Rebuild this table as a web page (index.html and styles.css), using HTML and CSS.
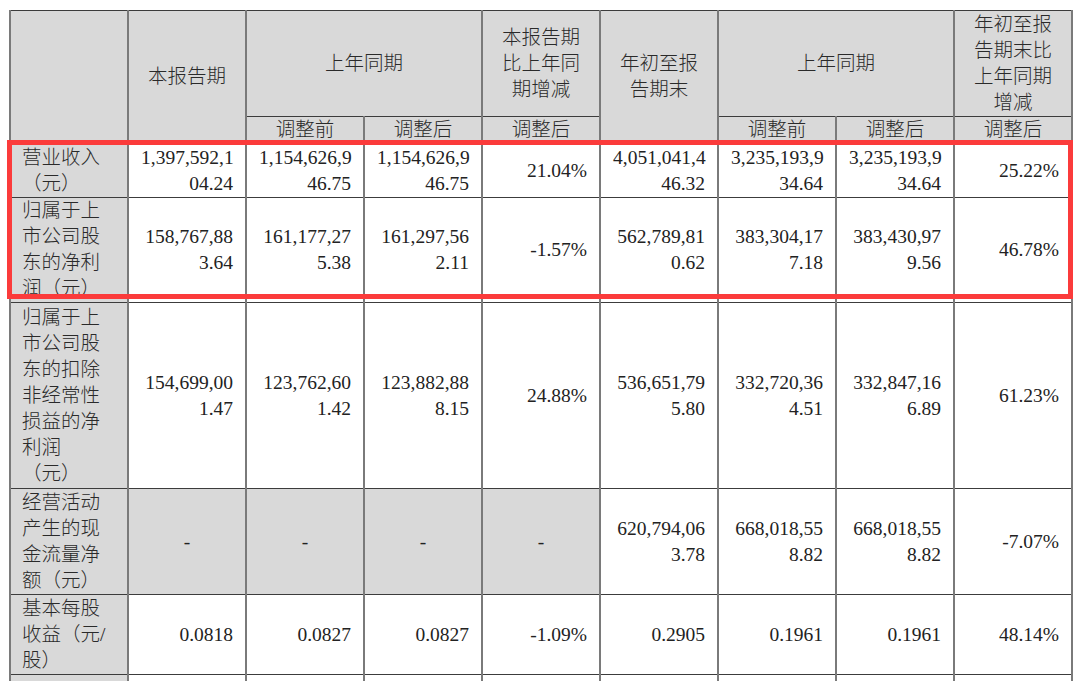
FILE: index.html
```html
<!DOCTYPE html>
<html lang="zh-CN">
<head>
<meta charset="utf-8">
<title>主要会计数据和财务指标</title>
<link rel="stylesheet" href="styles.css">
</head>
<body>
<div class="sheet">
  <table class="fin">
    <colgroup>
      <col><col><col><col><col><col><col><col><col>
    </colgroup>
    <thead>
      <tr class="h1">
        <th rowspan="2"></th>
        <th rowspan="2">本报告期</th>
        <th colspan="2">上年同期</th>
        <th>本报告期<br>比上年同<br>期增减</th>
        <th rowspan="2">年初至报<br>告期末</th>
        <th colspan="2">上年同期</th>
        <th>年初至报<br>告期末比<br>上年同期<br>增减</th>
      </tr>
      <tr class="h2">
        <th>调整前</th><th>调整后</th><th>调整后</th><th>调整前</th><th>调整后</th><th>调整后</th>
      </tr>
    </thead>
    <tbody>
      <tr class="r1">
        <td class="label">营业收入<br>（元）</td>
        <td class="num">1,397,592,1<br>04.24</td>
        <td class="num">1,154,626,9<br>46.75</td>
        <td class="num">1,154,626,9<br>46.75</td>
        <td class="num">21.04%</td>
        <td class="num">4,051,041,4<br>46.32</td>
        <td class="num">3,235,193,9<br>34.64</td>
        <td class="num">3,235,193,9<br>34.64</td>
        <td class="num">25.22%</td>
      </tr>
      <tr class="r2">
        <td class="label">归属于上<br>市公司股<br>东的净利<br>润（元）</td>
        <td class="num">158,767,88<br>3.64</td>
        <td class="num">161,177,27<br>5.38</td>
        <td class="num">161,297,56<br>2.11</td>
        <td class="num">-1.57%</td>
        <td class="num">562,789,81<br>0.62</td>
        <td class="num">383,304,17<br>7.18</td>
        <td class="num">383,430,97<br>9.56</td>
        <td class="num">46.78%</td>
      </tr>
      <tr class="r3">
        <td class="label">归属于上<br>市公司股<br>东的扣除<br>非经常性<br>损益的净<br>利润<br>（元）</td>
        <td class="num">154,699,00<br>1.47</td>
        <td class="num">123,762,60<br>1.42</td>
        <td class="num">123,882,88<br>8.15</td>
        <td class="num">24.88%</td>
        <td class="num">536,651,79<br>5.80</td>
        <td class="num">332,720,36<br>4.51</td>
        <td class="num">332,847,16<br>6.89</td>
        <td class="num">61.23%</td>
      </tr>
      <tr class="r4">
        <td class="label">经营活动<br>产生的现<br>金流量净<br>额（元）</td>
        <td class="dash">-</td>
        <td class="dash">-</td>
        <td class="dash">-</td>
        <td class="dash">-</td>
        <td class="num">620,794,06<br>3.78</td>
        <td class="num">668,018,55<br>8.82</td>
        <td class="num">668,018,55<br>8.82</td>
        <td class="num">-7.07%</td>
      </tr>
      <tr class="r5">
        <td class="label">基本每股<br>收益（元/<br>股）</td>
        <td class="num">0.0818</td>
        <td class="num">0.0827</td>
        <td class="num">0.0827</td>
        <td class="num">-1.09%</td>
        <td class="num">0.2905</td>
        <td class="num">0.1961</td>
        <td class="num">0.1961</td>
        <td class="num">48.14%</td>
      </tr>
      <tr class="r6">
        <td class="label"></td>
        <td class="num"></td>
        <td class="num"></td>
        <td class="num"></td>
        <td class="num"></td>
        <td class="num"></td>
        <td class="num"></td>
        <td class="num"></td>
        <td class="num"></td>
      </tr>
    </tbody>
  </table>
  <div class="highlight"></div>
</div>
</body>
</html>
```

FILE: styles.css
```css
* {
  box-sizing: border-box;
}

html, body {
  margin: 0;
  background: #ffffff;
}

body {
  height: 681px;
  overflow: hidden;
}

.sheet {
  position: relative;
  padding: 10px 0 0 9px;
}

.fin {
  border-collapse: collapse;
  table-layout: fixed;
  width: 1062px;
  font-family: "Liberation Serif", "Noto Sans CJK SC", serif;
  font-size: 19.5px;
  line-height: 26px;
  color: #222222;
}

.fin col {
  width: 118px;
}

.fin th,
.fin td {
  border-left: 2px solid #7a7a7a;
  border-right: 2px solid #7a7a7a;
  border-top: 1px solid #3c3c3c;
  border-bottom: 1px solid #3c3c3c;
  padding: 0 12px;
  vertical-align: middle;
}

.fin th {
  font-weight: 300;
  text-align: center;
  background: #d9d9d9;
  padding: 0 4px;
  color: #2a2a2a;
}

.fin td.label {
  font-weight: 300;
  text-align: left;
  background: #d9d9d9;
  padding: 0 4px 0 11px;
  color: #2a2a2a;
}

.fin td.num {
  text-align: right;
}

.fin td.dash {
  text-align: center;
  background: #d9d9d9;
}

.h1 { height: 106px; }
.h2 { height: 26px; }
.r1 { height: 54px; }
.r2 { height: 104px; }
.r3 { height: 186px; }
.r4 { height: 106px; }
.r5 { height: 80px; }
.r6 { height: 40px; }

.highlight {
  position: absolute;
  left: 7px;
  top: 140px;
  width: 1066px;
  height: 159px;
  border: 5px solid #fb3b3b;
  pointer-events: none;
}
```
